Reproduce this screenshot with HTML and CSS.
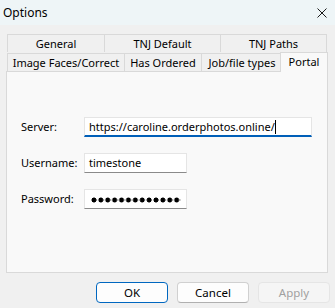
FILE: index.html
```html
<!DOCTYPE html>
<html lang="en">
<head>
    <meta charset="UTF-8">
    <title>Options</title>
    <link rel="stylesheet" href="styles.css">
</head>
<body>
    <div class="window">
        <div class="titlebar">
            <span class="title">Options</span>
            <svg class="close" width="10" height="10" viewBox="0 0 10 10">
                <path d="M0.5 0.5 L9.5 9.5 M9.5 0.5 L0.5 9.5" stroke="#1a1a1a" stroke-width="1"/>
            </svg>
        </div>

        <div class="content">
            <div class="tab-row back">
                <div class="tab t-general">General</div>
                <div class="tab t-default">TNJ Default</div>
                <div class="tab t-paths">TNJ Paths</div>
            </div>
            <div class="tab-row front">
                <div class="tab t-faces">Image Faces/Correct</div>
                <div class="tab t-ordered">Has Ordered</div>
                <div class="tab t-types">Job/file types</div>
                <div class="tab t-portal active">Portal</div>
            </div>

            <div class="panel">
                <div class="form">
                    <label>Server:</label>
                    <div class="field wide focused">https://caroline.orderphotos.online/<span class="caret"></span></div>
                    <label>Username:</label>
                    <div class="field">timestone</div>
                    <label>Password:</label>
                    <div class="field"><span class="dots" aria-label="password"></span></div>
                </div>
            </div>

            <div class="buttons">
                <button class="btn default">OK</button>
                <button class="btn">Cancel</button>
                <button class="btn" disabled>Apply</button>
            </div>
        </div>
    </div>
</body>
</html>
```

FILE: styles.css
```css
body {
    margin: 0;
    font-family: "Noto Sans", sans-serif;
    font-size: 11px;
    color: #000;
    background-color: #f0f0f0;
}
.window {
    width: 335px;
    height: 308px;
    overflow: hidden;
}
.titlebar {
    height: 25px;
    background-color: #eef5f7;
    display: flex;
    align-items: center;
    justify-content: space-between;
    padding: 0 8px 0 3px;
}
.title {
    font-size: 12px;
}
.content {
    padding: 9px 0 0 6px;
}
.tab-row {
    display: flex;
    padding-left: 1px;
}
.tab-row.front {
    align-items: flex-end;
}
.tab {
    box-sizing: border-box;
    height: 18px;
    line-height: 17px;
    text-align: center;
    border: 1px solid #d9d9d9;
    border-bottom: none;
    margin-right: -1px;
    background-color: #f0f0f0;
    white-space: nowrap;
}
.t-general { width: 98px; }
.t-default { width: 117px; }
.t-paths { width: 107px; }
.t-faces { width: 118px; }
.t-ordered { width: 78px; }
.t-types { width: 82px; }
.t-portal { width: 48px; }
.tab.active {
    position: relative;
    z-index: 1;
    height: 20px;
    line-height: 17px;
    margin-left: -2px;
    margin-bottom: -1px;
    background-color: #f9f9f9;
}
.panel {
    box-sizing: border-box;
    width: 322px;
    height: 202px;
    border: 1px solid #d9d9d9;
    background-color: #f9f9f9;
    padding: 45px 0 0 14px;
}
.form {
    display: grid;
    grid-template-columns: 63px auto;
    grid-auto-rows: 20px;
    row-gap: 16px;
    align-items: center;
    justify-items: start;
    line-height: 16px;
}
.field {
    box-sizing: border-box;
    width: 103px;
    height: 20px;
    line-height: 18px;
    padding: 0 4px;
    background-color: #fff;
    border: 1px solid #e5e5e5;
    border-bottom-color: #8a8a8a;
    white-space: nowrap;
    overflow: hidden;
}
.field.wide {
    width: 228px;
}
.field.focused {
    border-bottom: 2px solid #005fb8;
    line-height: 17px;
}
.caret {
    display: inline-block;
    width: 1px;
    height: 14px;
    background-color: #000;
    vertical-align: -3px;
}
.dots {
    display: inline-block;
    width: 90px;
    height: 6px;
    margin-left: 2px;
    vertical-align: 0;
    background: radial-gradient(circle at 3px 3px, #000 2.2px, transparent 2.8px) 0 0 / 6.9px 6px repeat-x;
}
.buttons {
    display: flex;
    justify-content: flex-end;
    gap: 9px;
    padding: 9px 5px 0 0;
}
.btn {
    box-sizing: border-box;
    width: 72px;
    height: 21px;
    padding: 0;
    font-family: inherit;
    font-size: 11.5px;
    color: #000;
    background-color: #fdfdfd;
    border: 1px solid #d0d0d0;
    border-bottom-color: #b0b0b0;
    border-radius: 4px;
}
.btn.default {
    border: 1px solid #0067c0;
}
.btn:disabled {
    color: #a0a0a0;
    background-color: #f5f5f5;
    border-color: #e5e5e5;
}
```
